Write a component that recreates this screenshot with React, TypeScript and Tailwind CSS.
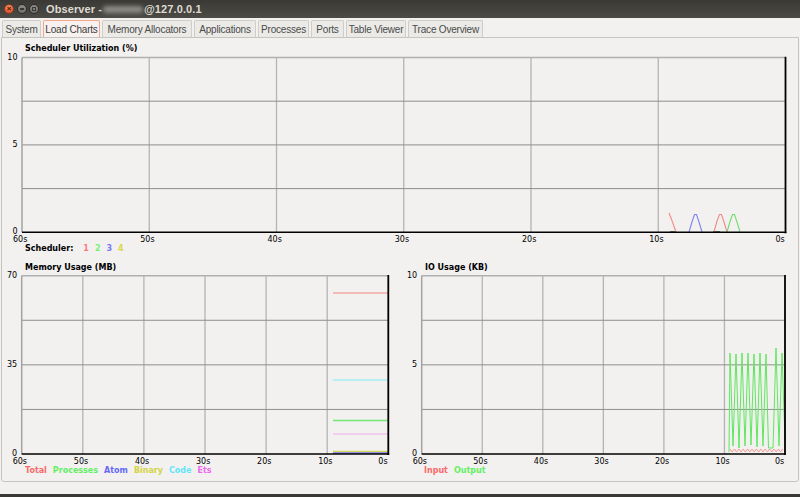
import React from "react";

const CF = "'DejaVu Sans', 'Liberation Sans', sans-serif";

type Pt = [number, number];
const toPts = (p: Pt[]) => p.map(([x, y]) => `${x},${y}`).join(" ");

function Chart({
  vx,
  vy,
  w,
  h,
  x0,
  y0,
  x1,
  y1,
  yLabels,
  children,
}: {
  vx: number;
  vy: number;
  w: number;
  h: number;
  x0: number;
  y0: number;
  x1: number;
  y1: number;
  yLabels: [string, string, string];
  children?: React.ReactNode;
}) {
  const xs = Array.from({ length: 7 }, (_, i) => x0 + (i * (x1 - x0)) / 6);
  const ys = Array.from({ length: 5 }, (_, i) => y0 + (i * (y1 - y0)) / 4);
  const xl = ["60s", "50s", "40s", "30s", "20s", "10s", "0s"];
  return (
    <svg
      width={w}
      height={h}
      viewBox={`${vx} ${vy} ${w} ${h}`}
      className="block shrink-0 overflow-visible"
      style={{ fontFamily: CF }}
    >
      {xs.slice(1, 6).map((x, i) => (
        <line key={"v" + i} x1={x} y1={y0} x2={x} y2={y1} stroke="#b4b4b4" strokeWidth={1.3} />
      ))}
      {ys.slice(1, 4).map((y, i) => (
        <line key={"h" + i} x1={x0} y1={y} x2={x1} y2={y} stroke="#8e8e8e" strokeWidth={1} />
      ))}
      {children}
      <line x1={x0} y1={y0} x2={x1} y2={y0} stroke="#b0b0b0" strokeWidth={1.5} />
      <line x1={x0} y1={y0} x2={x0} y2={y1} stroke="#a2a2a2" strokeWidth={1.5} />
      <line x1={x1} y1={y0 - 0.7} x2={x1} y2={y1 + 1} stroke="#000" strokeWidth={1.8} />
      <line x1={x0} y1={y1} x2={x1 + 0.9} y2={y1} stroke="#000" strokeWidth={1.5} />
      {[yLabels[0], yLabels[1], yLabels[2]].map((t, i) => (
        <text
          key={"yl" + i}
          x={x0 - 4.5}
          y={ys[i * 2] - (i === 2 ? 1 : 0)}
          fontSize={8}
          textAnchor="end"
          dominantBaseline="central"
          fill="#000"
        >
          {t}
        </text>
      ))}
      {xl.map((t, i) => (
        <text
          key={"xl" + i}
          x={xs[i] - (t.length === 2 ? 10 : 9)}
          y={y1 + 7}
          fontSize={8}
          dominantBaseline="central"
          fill="#000"
        >
          {t}
        </text>
      ))}
    </svg>
  );
}

const tabs: [string, number][] = [
  ["System", 39],
  ["Load Charts", 57],
  ["Memory Allocators", 90],
  ["Applications", 62],
  ["Processes", 51],
  ["Ports", 33],
  ["Table Viewer", 60],
  ["Trace Overview", 75],
];

function TitleBar() {
  return (
    <div
      className="h-[18px] shrink-0 bg-gradient-to-b from-[#3a3935] to-[#4c4b46] flex items-center relative"
      style={{ fontFamily: "'Liberation Sans', sans-serif" }}
    >
      <div className="absolute left-[4px] top-[4px] w-[10px] h-[10px] rounded-full bg-gradient-to-b from-[#f28a5c] to-[#e0502a] border border-[#8f3a1e] flex items-center justify-center text-[#4a1a0c] text-[8px] leading-none font-bold">
        ×
      </div>
      <div className="absolute left-[17px] top-[4px] w-[10px] h-[10px] rounded-full bg-gradient-to-b from-[#8f8e89] to-[#6f6e69] border border-[#2e2d2a] flex items-center justify-center">
        <div className="w-[4px] h-[1.5px] bg-[#3a3935]" />
      </div>
      <div className="absolute left-[29px] top-[4px] w-[10px] h-[10px] rounded-full bg-gradient-to-b from-[#8f8e89] to-[#6f6e69] border border-[#2e2d2a] flex items-center justify-center">
        <div className="w-[4px] h-[4px] border border-[#3a3935]" />
      </div>
      <div className="ml-[46px] flex items-center text-[11px] font-bold text-[#dfdbd2] leading-none tracking-[0.1px]">
        <span>Observer - </span>
        <span className="inline-block w-[40px] h-[7px] mx-[1px] rounded-full bg-[#8d8b85] blur-[2px]" />
        <span>@127.0.0.1</span>
      </div>
    </div>
  );
}

export default function App() {
  const sched: { c: string; p: Pt[] }[] = [
    { c: "#f08a8a", p: [[669, 213], [672.5, 222], [676, 232]] },
    { c: "#8080f0", p: [[689, 232], [692, 222], [694.5, 214.5], [696.5, 214.5], [699, 222], [702, 232]] },
    { c: "#f08a8a", p: [[714, 232], [717, 221], [719.5, 214.5], [721.5, 214.5], [724, 222], [727, 232]] },
    { c: "#70dc70", p: [[727, 232], [730.5, 220], [732.5, 214.5], [734.5, 214.5], [737, 222], [740, 232]] },
  ];

  const out: Pt[] = [
    [729, 452], [730, 353], [733, 446], [736, 354], [739, 448], [742, 353], [745, 446],
    [748, 353], [751, 445], [754, 354], [757, 447], [760, 353], [763, 446], [766, 354],
    [768.5, 448], [773, 448], [776, 348], [779, 446], [782, 353], [785, 441],
  ];
  const inp: Pt[] = [];
  for (let x = 730, i = 0; x <= 785; x += 2.2, i++) inp.push([x, i % 2 === 0 ? 449 : 452]);

  const memLines: { c: string; y: number }[] = [
    { c: "#f4a4a4", y: 293 },
    { c: "#a4eef2", y: 380 },
    { c: "#74e874", y: 420.5 },
    { c: "#f0c0ee", y: 434 },
    { c: "#d8d860", y: 451.5 },
    { c: "#7070e0", y: 453 },
  ];

  const legendB = (items: [string, string][]) => (
    <div
      className="h-[10px] flex items-center gap-[6px] text-[8px] font-bold leading-none"
      style={{ fontFamily: CF }}
    >
      {items.map(([t, c]) => (
        <span key={t} style={{ color: c }}>
          {t}
        </span>
      ))}
    </div>
  );

  return (
    <div className="w-[800px] h-[497px] bg-[#f2f1f0] flex flex-col overflow-hidden relative">
      <TitleBar />
      <div
        className="h-[19px] shrink-0 flex items-end pl-[2px] gap-[2px]"
        style={{ fontFamily: "'Liberation Sans', sans-serif" }}
      >
        {tabs.map(([t, w], i) => (
          <div
            key={t}
            className={
              i === 1
                ? "h-[17px] flex items-center justify-center rounded-t-[2px] border border-b-0 border-[#f2a68a] bg-[#f7f2ef] text-[10px] text-[#3c3c3c] tracking-[-0.2px]"
                : "h-[17px] flex items-center justify-center rounded-t-[2px] border border-b-0 border-[#cfcdc9] bg-[#ebeae7] text-[10px] text-[#4a4a4a] tracking-[-0.2px]"
            }
            style={{ width: w }}
          >
            {t}
          </div>
        ))}
      </div>
      <div className="h-[445px] shrink-0 mx-[1px] border border-[#c6c4c0] rounded-b-[3px] flex flex-col">
        <div
          className="pt-[6px] pl-[23px] h-[16px] text-[8px] font-bold leading-[10px] text-black"
          style={{ fontFamily: CF }}
        >
          Scheduler Utilization (%)
        </div>
        <Chart vx={2} vy={54} w={796} h={190} x0={22} y0={57.5} x1={785.5} y1={232.3} yLabels={["10", "5", "0"]}>
          <line x1={670} y1={232} x2={676} y2={232} stroke="#2a6a2a" strokeWidth={1.5} />
          <line x1={713} y1={232} x2={720} y2={232} stroke="#2a6a2a" strokeWidth={1.5} />
          {sched.map((s, i) => (
            <polyline key={i} points={toPts(s.p)} fill="none" stroke={s.c} strokeWidth={1.1} />
          ))}
        </Chart>
        <div
          className="h-[10px] pl-[23px] flex items-center text-[8px] font-bold leading-none"
          style={{ fontFamily: CF }}
        >
          <span className="text-black">Scheduler:</span>
          <div className="ml-[10px] flex gap-[6px]">
            <span className="text-[#f87a7a]">1</span>
            <span className="text-[#78f078]">2</span>
            <span className="text-[#7a7af8]">3</span>
            <span className="text-[#d8d848]">4</span>
          </div>
        </div>
        <div className="mt-[9px] flex">
          <div className="w-[398px] flex flex-col">
            <div
              className="pl-[23px] h-[10px] text-[8px] font-bold leading-[10px] text-black"
              style={{ fontFamily: CF }}
            >
              Memory Usage (MB)
            </div>
            <Chart vx={2} vy={273} w={398} h={193} x0={21.7} y0={275.7} x1={388.3} y1={454} yLabels={["70", "35", "0"]}>
              {memLines.map((m, i) => (
                <line key={i} x1={333} y1={m.y} x2={388} y2={m.y} stroke={m.c} strokeWidth={1.3} />
              ))}
            </Chart>
            <div className="pl-[23px]">
              {legendB([
                ["Total", "#f86a6a"],
                ["Processes", "#62f062"],
                ["Atom", "#6868f8"],
                ["Binary", "#d4d444"],
                ["Code", "#62e6f8"],
                ["Ets", "#f068f0"],
              ])}
            </div>
          </div>
          <div className="w-[398px] flex flex-col">
            <div
              className="pl-[25px] h-[10px] text-[8px] font-bold leading-[10px] text-black"
              style={{ fontFamily: CF }}
            >
              IO Usage (KB)
            </div>
            <Chart vx={400} vy={273} w={398} h={193} x0={421.7} y0={275.7} x1={785} y1={454} yLabels={["10", "5", "0"]}>
              <polyline points={toPts(out)} fill="none" stroke="#5ee85e" strokeWidth={1} />
              <polyline points={toPts(inp)} fill="none" stroke="#f49a9a" strokeWidth={1} />
            </Chart>
            <div className="pl-[24px]">
              {legendB([
                ["Input", "#f86a6a"],
                ["Output", "#62f062"],
              ])}
            </div>
          </div>
        </div>
      </div>
      <div className="flex-1" />
      <div className="h-[3px] shrink-0 bg-[#3a3936]" />
    </div>
  );
}
